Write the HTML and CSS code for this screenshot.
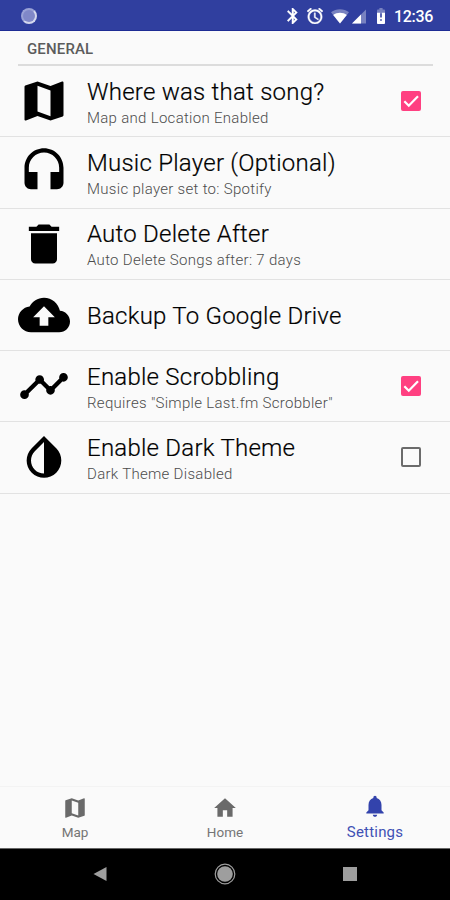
FILE: index.html
```html
<!DOCTYPE html>
<html lang="en">
<head>
  <meta charset="UTF-8" />
  <meta name="viewport" content="width=device-width, initial-scale=1.0"/>
  <title>Settings</title>
  <link rel="stylesheet" href="styles.css">
</head>
<body>

  <header class="status-bar">
    <span class="spinner"></span>
    <div class="status-icons">
      <svg class="bluetooth" viewBox="5 2 14.5 20"><path d="M17.71 7.71L12 2h-1v7.59L6.41 5 5 6.41 10.59 12 5 17.59 6.41 19 11 14.41V22h1l5.71-5.71-4.3-4.29 4.3-4.29zM13 5.83l1.88 1.88L13 9.59V5.83zm1.88 10.46L13 18.17v-3.76l1.88 1.88z"/></svg>
      <svg class="alarm" viewBox="2 2 20 20"><path d="M22 5.72l-4.6-3.86-1.29 1.53 4.6 3.86L22 5.72zM7.88 3.39L6.6 1.86 2 5.71l1.29 1.53 4.59-3.85zM12.5 8H11v6l4.75 2.85.75-1.23-4-2.37V8zM12 4c-4.97 0-9 4.03-9 9s4.02 9 9 9c4.97 0 9-4.03 9-9s-4.03-9-9-9zm0 16c-3.87 0-7-3.13-7-7s3.13-7 7-7 7 3.13 7 7-3.13 7-7 7z"/></svg>
      <svg class="wifi" viewBox="0 0 18 16"><path class="faded" d="M9 15.500L0 4.200C5 .3 13 .3 18 4.200z"/><path d="M9 15.500L2.200 7C6 4 12 4 15.800 7z"/></svg>
      <svg class="signal" viewBox="0 0 14 14"><path class="faded" d="M0 14H14V0z"/><path d="M0 14H9V5z"/></svg>
      <svg class="battery" viewBox="7 2 10 20"><path class="faded" d="M17 5.330C17 4.600 16.400 4 15.670 4H14V2h-4v2H8.330C7.600 4 7 4.600 7 5.330V9h10z"/><path fill-rule="evenodd" d="M7 8h10v12.670c0 .73-.6 1.330-1.330 1.330H8.330C7.600 22 7 21.400 7 20.670zM11 8v6h2V8zm0 8v2h2v-2z"/></svg>
      <span class="clock">12:36</span>
    </div>
  </header>

  <main class="settings">
    <h2>GENERAL</h2>

    <div class="row">
      <svg class="icon" viewBox="0 0 24 24"><path d="M20.500 3l-.16.030L15 5.100 9 3 3.360 4.900c-.21.070-.36.250-.36.480V20.500c0 .28.220.5.500.5l.16-.03L9 18.900l6 2.100 5.640-1.900c.21-.07.360-.25.360-.48V3.500c0-.28-.22-.5-.5-.5zM15 19l-6-2.110V5l6 2.110V19z"/></svg>
      <div class="text">
        <p class="title">Where was that song?</p>
        <p class="summary">Map and Location Enabled</p>
      </div>
      <span class="checkbox checked"><svg viewBox="0 0 18 18"><path d="M3 9.200l4 4 8.300-8.400"/></svg></span>
    </div>

    <div class="row">
      <svg class="icon" viewBox="0 0 24 24"><path d="M12 1c-4.970 0-9 4.030-9 9v7c0 1.660 1.340 3 3 3h3v-8H5v-2c0-3.870 3.130-7 7-7s7 3.130 7 7v2h-4v8h3c1.660 0 3-1.340 3-3v-7c0-4.970-4.030-9-9-9z"/></svg>
      <div class="text">
        <p class="title">Music Player (Optional)</p>
        <p class="summary">Music player set to: Spotify</p>
      </div>
    </div>

    <div class="row">
      <svg class="icon" viewBox="0 0 24 24"><path d="M6 19c0 1.100.9 2 2 2h8c1.100 0 2-.9 2-2V7H6v12zM19 4h-3.500l-1-1h-5l-1 1H5v2h14V4z"/></svg>
      <div class="text">
        <p class="title">Auto Delete After</p>
        <p class="summary">Auto Delete Songs after: 7 days</p>
      </div>
    </div>

    <div class="row">
      <svg class="icon" viewBox="0 0 24 24"><path d="M19.350 10.040C18.670 6.590 15.640 4 12 4 9.110 4 6.600 5.640 5.350 8.040 2.340 8.360 0 10.910 0 14c0 3.310 2.690 6 6 6h13c2.760 0 5-2.240 5-5 0-2.640-2.050-4.780-4.650-4.960zM14 13v4h-4v-4H7l5-5 5 5h-3z"/></svg>
      <div class="text">
        <p class="title">Backup To Google Drive</p>
      </div>
    </div>

    <div class="row">
      <svg class="icon" viewBox="0 0 24 24"><path d="M23 8c0 1.100-.9 2-2 2-.18 0-.35-.02-.51-.07l-3.560 3.550c.05.16.07.340.07.520 0 1.100-.9 2-2 2s-2-.9-2-2c0-.18.020-.36.070-.52l-2.550-2.550c-.16.050-.34.070-.52.070s-.36-.02-.52-.07l-4.550 4.560c.05.160.07.330.07.510 0 1.100-.9 2-2 2s-2-.9-2-2 .9-2 2-2c.18 0 .35.020.51.070l4.560-4.550C8.020 9.360 8 9.180 8 9c0-1.100.9-2 2-2s2 .9 2 2c0 .18-.02.360-.07.520l2.550 2.550c.16-.05.34-.07.520-.07s.36.020.52.070l3.550-3.560C19.020 8.350 19 8.180 19 8c0-1.100.9-2 2-2s2 .9 2 2z"/></svg>
      <div class="text">
        <p class="title">Enable Scrobbling</p>
        <p class="summary">Requires "Simple Last.fm Scrobbler"</p>
      </div>
      <span class="checkbox checked"><svg viewBox="0 0 18 18"><path d="M3 9.200l4 4 8.300-8.400"/></svg></span>
    </div>

    <div class="row">
      <svg class="icon" viewBox="0 0 24 24"><path d="M17.660 7.930L12 2.270 6.340 7.930c-3.120 3.120-3.120 8.190 0 11.310C7.900 20.800 9.950 21.580 12 21.580c2.050 0 4.100-.78 5.660-2.340 3.120-3.120 3.120-8.190 0-11.310zM12 19.590c-1.600 0-3.110-.62-4.240-1.760C6.620 16.690 6 15.190 6 13.590s.62-3.110 1.760-4.240L12 5.100v14.490z"/></svg>
      <div class="text">
        <p class="title">Enable Dark Theme</p>
        <p class="summary">Dark Theme Disabled</p>
      </div>
      <span class="checkbox"></span>
    </div>
  </main>

  <nav class="tabs">
    <div class="tab">
      <svg viewBox="0 0 24 24"><path d="M20.500 3l-.16.030L15 5.100 9 3 3.360 4.900c-.21.070-.36.250-.36.480V20.500c0 .28.220.5.500.5l.16-.03L9 18.900l6 2.100 5.640-1.900c.21-.07.360-.25.360-.48V3.500c0-.28-.22-.5-.5-.5zM15 19l-6-2.110V5l6 2.110V19z"/></svg>
      <span>Map</span>
    </div>
    <div class="tab">
      <svg viewBox="0 0 24 24"><path d="M10 20v-6h4v6h5v-8h3L12 3 2 12h3v8z"/></svg>
      <span>Home</span>
    </div>
    <div class="tab active">
      <svg viewBox="0 0 24 24"><path d="M12 22c1.100 0 2-.9 2-2h-4c0 1.100.89 2 2 2zm6-6v-5c0-3.070-1.640-5.640-4.500-6.320V4c0-.83-.67-1.500-1.500-1.500s-1.500.67-1.500 1.500v.68C7.630 5.360 6 7.920 6 11v5l-2 2v1h16v-1l-2-2z"/></svg>
      <span>Settings</span>
    </div>
  </nav>

  <footer class="system-nav">
    <svg viewBox="0 0 24 24"><path d="M5.500 12L18.500 5v14z"/></svg>
    <svg viewBox="0 0 24 24"><circle cx="12" cy="12" r="7.800"/><circle class="ring" cx="12" cy="12" r="9.800"/></svg>
    <svg viewBox="0 0 24 24"><path d="M5 5h14v14H5z"/></svg>
  </footer>

</body>
</html>
```
FILE: styles.css
```css
* {
  box-sizing: border-box;
}

body {
  margin: 0;
  height: 100vh;
  display: flex;
  flex-direction: column;
  font-family: Roboto, sans-serif;
  background: #fafafa;
  color: #0c0c0c;
}

p,
h2 {
  margin: 0;
}

.status-bar {
  height: 31px;
  flex: none;
  display: flex;
  justify-content: space-between;
  align-items: center;
  padding: 2px 17px 0 21px;
  background: #303f9f;
  border-bottom: 1px solid #1d2c94;
  color: white;
}

.spinner {
  width: 16px;
  height: 16px;
  border-radius: 50%;
  background: #8088c8;
  border: 2px solid #9aa2d6;
  border-right-color: #d4d8ee;
  border-bottom-color: #d4d8ee;
}

.status-icons {
  display: flex;
  align-items: center;
  fill: white;
}

.faded {
  opacity: 0.35;
}

.bluetooth {
  width: 12px;
  height: 16px;
  margin-right: 8px;
  stroke: white;
  stroke-width: 0.6;
}

.alarm {
  width: 16px;
  height: 16px;
  margin-right: 8px;
  stroke: white;
  stroke-width: 0.5;
}

.wifi {
  width: 18px;
  height: 16px;
  margin-right: 3px;
}

.signal {
  width: 14px;
  height: 15px;
  margin-right: 10px;
}

.battery {
  width: 10px;
  height: 16px;
  margin-right: 8px;
}

.clock {
  font-size: 16px;
  font-weight: 500;
  line-height: 16px;
  letter-spacing: -0.3px;
  padding-top: 1px;
}

.settings {
  flex: 1;
}

h2 {
  height: 35px;
  margin: 0 17px 0 18px;
  padding-left: 9px;
  border-bottom: 2px solid #dcdcdc;
  font-size: 15px;
  font-weight: 500;
  line-height: 37px;
  letter-spacing: 0.15px;
  color: #5c5c5c;
}

.row {
  height: 71.25px;
  display: flex;
  align-items: center;
  padding: 0 29px 0 18px;
  border-bottom: 1.5px solid #e2e2e2;
}

.icon {
  width: 52px;
  height: 52px;
  margin-right: 17px;
  fill: black;
}

.text {
  flex: 1;
  padding-top: 3px;
  white-space: nowrap;
}

.title {
  font-size: 24px;
  font-weight: 300;
  line-height: 28px;
  letter-spacing: 0.24px;
  color: black;
  -webkit-text-stroke: 0.2px black;
}

.summary {
  font-size: 15px;
  font-weight: 300;
  line-height: 20px;
  letter-spacing: 0.3px;
  margin-top: 2px;
  color: #4c4c4c;
}

.checkbox {
  width: 20px;
  height: 20px;
  border: 2px solid #6b6b6b;
  border-radius: 2px;
}

.checked {
  border: none;
  background: #ff4081;
}

.checkbox svg {
  display: block;
  fill: none;
  stroke: white;
  stroke-width: 2;
}

.tabs {
  height: 62px;
  flex: none;
  display: flex;
  border-top: 1px solid #f3f3f3;
}

.tab {
  flex: 1;
  display: flex;
  flex-direction: column;
  align-items: center;
  padding-top: 8px;
  font-size: 13.5px;
  color: #757575;
  fill: #6a6a6a;
}

.tab svg {
  width: 26px;
  height: 26px;
}

.tab span {
  line-height: 18px;
  margin-top: 2px;
}

.active {
  padding-top: 6px;
  font-size: 15px;
  letter-spacing: 0.2px;
  color: #3f51b5;
  fill: #3343ac;
}

.active span {
  margin-top: 4px;
}

.system-nav {
  height: 52px;
  flex: none;
  display: flex;
  justify-content: center;
  align-items: center;
  gap: 101px;
  padding-bottom: 2px;
  background: black;
  border-top: 1px solid #666;
  fill: #9e9e9e;
}

.system-nav svg {
  width: 24px;
  height: 24px;
}

.ring {
  fill: none;
  stroke: #9e9e9e;
  stroke-width: 1.2;
}
```
